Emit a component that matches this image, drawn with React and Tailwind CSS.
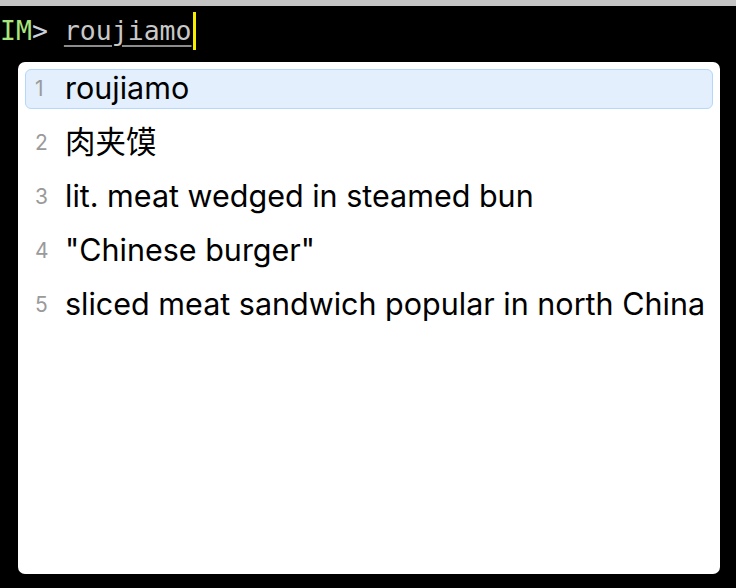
const candidates = [
  "roujiamo",
  "肉夹馍",
  "lit. meat wedged in steamed bun",
  "\"Chinese burger\"",
  "sliced meat sandwich popular in north China",
];

export default function App() {
  return (
    <div className="h-[588px] w-[736px] overflow-hidden bg-black">
      <div className="h-[6px] bg-[#c4c4c4]" />
      {/* prompt line */}
      <div
        className="flex h-[50px] items-center text-[26.5px] leading-none"
        style={{ fontFamily: '"DejaVu Sans Mono", monospace' }}
      >
        <span className="text-[#a9e57d]">IM</span>
        <span className="text-[#c9d1dc]">&gt;</span>
        <span className="ml-[16px] text-[#c8c8c8] underline decoration-[#8c8c8c] decoration-2 underline-offset-[5px]">
          roujiamo
        </span>
        <span className="ml-[1px] h-[38px] w-[3px] bg-[#f5ee00]" />
      </div>
      {/* candidate panel */}
      <div
        className="mx-[18px] mt-[6px] h-[512px] w-[702px] rounded-[7px] bg-white p-[7px]"
        style={{ fontFamily: 'Inter, "Noto Sans CJK SC", sans-serif' }}
      >
        {candidates.map((c, i) => (
          <div
            key={i}
            className={
              i === 0
                ? "mb-[14px] flex h-[40px] items-center rounded-[6px] border border-[#b4d7fb] bg-[#e3effd]"
                : "mb-[14px] flex h-[40px] items-center border border-transparent"
            }
          >
            <span className="w-[39px] pl-[9px] text-[21px] text-[#9a9a9a]">{i + 1}</span>
            <span className="-mt-[3px] whitespace-nowrap text-[30.5px] text-black">{c}</span>
          </div>
        ))}
      </div>
    </div>
  );
}
